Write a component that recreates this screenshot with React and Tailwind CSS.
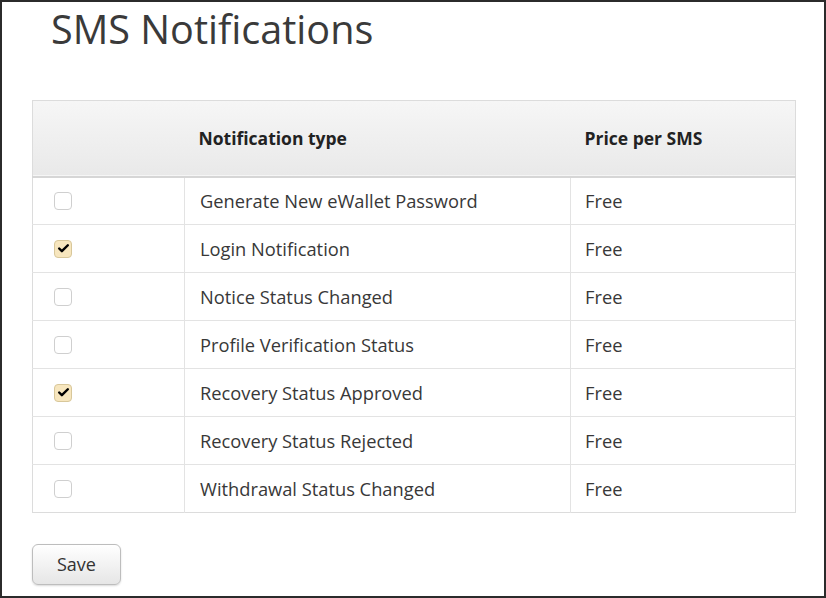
import { Check } from "lucide-react";

const rows = [
  { label: "Generate New eWallet Password", on: false },
  { label: "Login Notification", on: true },
  { label: "Notice Status Changed", on: false },
  { label: "Profile Verification Status", on: false },
  { label: "Recovery Status Approved", on: true },
  { label: "Recovery Status Rejected", on: false },
  { label: "Withdrawal Status Changed", on: false },
];

function Box({ on }) {
  if (on) {
    return (
      <span className="w-[18px] h-[18px] rounded-[4px] border border-[#d8c79a] bg-[#f7e6be] flex items-center justify-center">
        <Check size={13} strokeWidth={4.5} className="text-black" />
      </span>
    );
  }
  return <span className="w-[18px] h-[18px] rounded-[4px] border border-[#cfcfcf] bg-white block" />;
}

export default function App() {
  return (
    <div
      className="w-[826px] h-[598px] bg-white border-2 border-[#2b2b2b] text-[#383838] overflow-hidden"
      style={{ fontFamily: '"Open Sans", "Noto Sans", sans-serif' }}
    >
      <h1 className="pl-[49px] pt-0 text-[39.6px] leading-[54px] text-[#3a3a3a] font-normal">SMS Notifications</h1>

      <table className="ml-[30px] mt-[44px] w-[764px] border-collapse border border-[#dcdcdc] text-[18.3px]">
        <thead>
          <tr className="h-[76px] bg-gradient-to-b from-[#f6f6f6] to-[#e9e9e9] border-b-2 border-[#d6d6d6] text-[17.5px]">
            <th className="w-[152px]" />
            <th className="w-[386px] text-left pl-[14px] font-bold text-[#222]">Notification type</th>
            <th className="text-left pl-[14px] font-bold text-[#222]">Price per SMS</th>
          </tr>
        </thead>
        <tbody>
          {rows.map((r) => (
            <tr key={r.label} className="h-[48px] border-t border-[#e3e3e3]">
              <td className="pl-[21px] border-r border-[#e3e3e3]">
                <Box on={r.on} />
              </td>
              <td className="pl-[15px] border-r border-[#e3e3e3]">{r.label}</td>
              <td className="pl-[14px]">Free</td>
            </tr>
          ))}
        </tbody>
      </table>

      <button className="ml-[30px] mt-[31px] w-[89px] h-[41px] rounded-[6px] border border-[#bdbdbd] bg-gradient-to-b from-white to-[#e6e6e6] shadow-[0_1px_2px_rgba(0,0,0,0.15)] text-[18px] text-[#333]">
        Save
      </button>
    </div>
  );
}
